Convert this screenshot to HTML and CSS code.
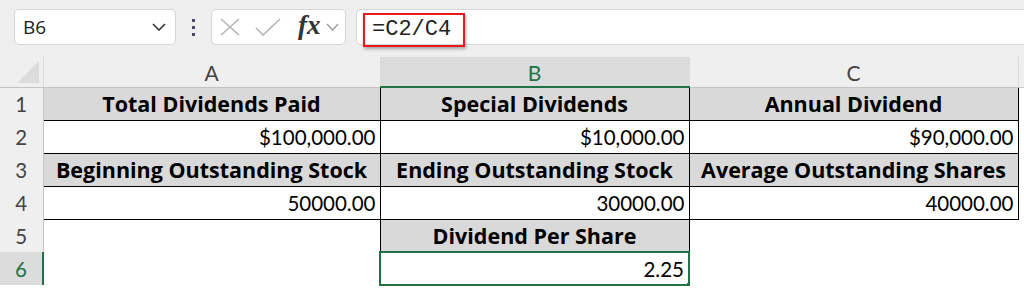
FILE: index.html
```html
<!DOCTYPE html>
<html lang="en">
  <head>
    <meta charset="UTF-8" />
    <title>Dividend Per Share</title>
    <link rel="stylesheet" href="styles.css">
  </head>
  <body>
    <div class="toolbar">
      <div class="namebox">
        <span>B6</span>
        <svg width="14" height="8" viewBox="0 0 14 8"><path d="M1 1l6 6 6-6" fill="none" stroke="#333" stroke-width="1.6"/></svg>
      </div>
      <div class="dots"><i></i><i></i><i></i></div>
      <div class="fxbox">
        <svg width="22" height="18" viewBox="0 0 22 18"><path d="M2 1l18 16M20 1L2 17" stroke="#b4b4b4" stroke-width="1.6"/></svg>
        <svg width="26" height="18" viewBox="0 0 26 18"><path d="M1 10l7 7L25 1" fill="none" stroke="#b4b4b4" stroke-width="1.6"/></svg>
        <span class="fx">fx</span>
        <svg width="13" height="8" viewBox="0 0 13 8"><path d="M1 1l5.5 6L12 1" fill="none" stroke="#9a9a9a" stroke-width="1.3"/></svg>
      </div>
      <div class="formula">
        <span class="highlight">=C2/C4</span>
      </div>
    </div>

    <table class="sheet">
      <colgroup>
        <col style="width:43px">
        <col style="width:337px">
        <col style="width:309px">
        <col style="width:329px">
        <col>
      </colgroup>
      <tr class="colhead">
        <th class="corner"><div class="tri"></div></th>
        <th>A</th>
        <th class="active">B</th>
        <th>C</th>
        <th class="blank"></th>
      </tr>
      <tr>
        <th class="rowhead">1</th>
        <td class="d h">Total Dividends Paid</td>
        <td class="d h">Special Dividends</td>
        <td class="d h">Annual Dividend</td>
        <td></td>
      </tr>
      <tr>
        <th class="rowhead">2</th>
        <td class="d n">$100,000.00</td>
        <td class="d n">$10,000.00</td>
        <td class="d n">$90,000.00</td>
        <td></td>
      </tr>
      <tr>
        <th class="rowhead">3</th>
        <td class="d h">Beginning Outstanding Stock</td>
        <td class="d h">Ending Outstanding Stock</td>
        <td class="d h">Average Outstanding Shares</td>
        <td></td>
      </tr>
      <tr>
        <th class="rowhead">4</th>
        <td class="d n">50000.00</td>
        <td class="d n">30000.00</td>
        <td class="d n">40000.00</td>
        <td></td>
      </tr>
      <tr>
        <th class="rowhead">5</th>
        <td></td>
        <td class="d h">Dividend Per Share</td>
        <td></td>
        <td></td>
      </tr>
      <tr>
        <th class="rowhead active">6</th>
        <td></td>
        <td class="d n selected">2.25<span class="handle"></span></td>
        <td></td>
        <td></td>
      </tr>
    </table>
  </body>
</html>
```

FILE: styles.css
```css
* {
  margin: 0;
  padding: 0;
  box-sizing: border-box;
}

html,
body {
  height: 294px;
  overflow: hidden;
}

body {
  font-family: "Lato", "Liberation Sans", sans-serif;
  background-color: #fff;
  color: #000;
}

.toolbar {
  height: 57px;
  background-color: #efefef;
  display: flex;
  align-items: flex-start;
  padding: 9px 0 0 14px;
}

.namebox {
  width: 162px;
  height: 36px;
  background-color: #fff;
  border: 1px solid #d6d6d6;
  border-radius: 5px;
  display: flex;
  align-items: center;
  justify-content: space-between;
  padding: 0 9px 0 8px;
  font-family: "Open Sans", sans-serif;
  font-size: 19px;
  color: #222;
}

.dots {
  width: 35px;
  height: 36px;
  display: flex;
  flex-direction: column;
  align-items: center;
  justify-content: center;
  gap: 4px;
}

.dots i {
  display: block;
  width: 3px;
  height: 3px;
  background-color: #4a4a5a;
}

.fxbox {
  width: 135px;
  height: 36px;
  background-color: #fff;
  border: 1px solid #d6d6d6;
  border-radius: 5px;
  display: flex;
  align-items: center;
  padding: 0 0 0 7px;
}

.fxbox svg:nth-child(2) {
  margin-left: 14px;
}

.fx {
  font-family: "Liberation Serif", serif;
  font-style: italic;
  font-weight: bold;
  font-size: 27px;
  color: #333;
  margin: -4px 5px 0 17px;
}

.formula {
  flex: 1;
  height: 36px;
  margin-left: 10px;
  background-color: #fff;
  border: 1px solid #d6d6d6;
  border-right: none;
  border-radius: 5px 0 0 5px;
  padding: 2px 0 0 6px;
}

.highlight {
  display: inline-block;
  width: 102px;
  height: 34px;
  border: 2px solid #e8191c;
  box-shadow: 1px 2px 3px rgba(0, 0, 0, 0.3);
  font-family: "Liberation Mono", monospace;
  font-size: 22px;
  line-height: 30px;
  padding-left: 7px;
  color: #222;
  margin-top: 1px;
}

.sheet {
  width: 1024px;
  border-collapse: collapse;
  table-layout: fixed;
}

.sheet th,
.sheet td {
  height: 33px;
  padding: 0 4px;
  white-space: nowrap;
  overflow: hidden;
  font-size: 20.5px;
}

.colhead th {
  height: 30px;
  background-color: #efefef;
  color: #444;
  font-weight: normal;
  font-size: 21px;
  text-align: center;
  border-bottom: 1px solid #c4c4c4;
  border-right: 1px solid #dadada;
  padding-top: 2px;
}

.colhead th.active {
  background-color: #dcdcdc;
  color: #217346;
  border-bottom: 2px solid #217346;
}

.colhead th.blank {
  border-right: none;
}

.corner {
  position: relative;
}

.tri {
  position: absolute;
  right: 4px;
  bottom: 4px;
  width: 0;
  height: 0;
  border-left: 22px solid transparent;
  border-bottom: 22px solid #dcdcdc;
}

.rowhead {
  background-color: #efefef;
  color: #444;
  font-weight: normal;
  font-size: 22px;
  text-align: center;
  border-right: 1px solid #c4c4c4;
}

.rowhead.active {
  background-color: #dcdcdc;
  color: #217346;
  border-right: 2px solid #217346;
}

.d {
  border: 1px solid #000;
}

.sheet .h {
  background-color: #d9d9d9;
  font-family: "Open Sans", sans-serif;
  font-weight: bold;
  font-size: 21.5px;
  text-align: center;
}

.n {
  text-align: right;
  padding-right: 3px;
}

.selected {
  border: 2px solid #217346;
  position: relative;
  overflow: visible;
}

.handle {
  position: absolute;
  right: -5px;
  bottom: -5px;
  width: 7px;
  height: 7px;
  background-color: #217346;
  border: 1px solid #fff;
}
```
